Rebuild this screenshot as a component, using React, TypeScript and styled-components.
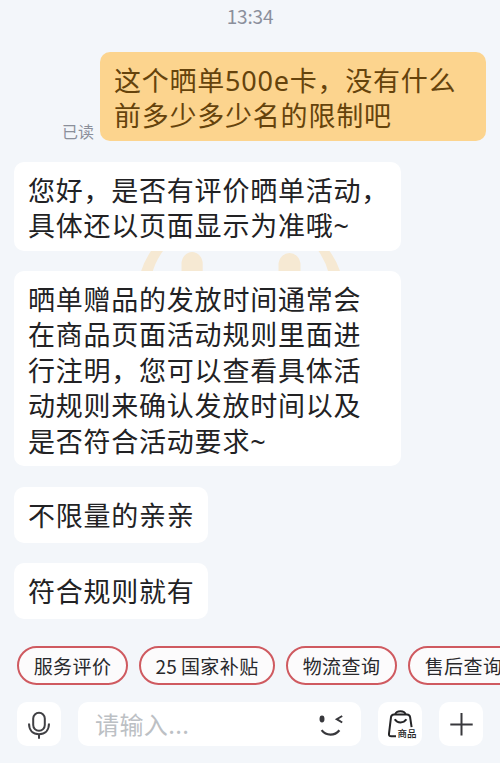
import styled, { createGlobalStyle } from "styled-components";

interface Message {
  id: number;
  lines: string[];
  width: number;
  height: number;
  gap: number;
}

const messages: Message[] = [
  {
    id: 1,
    lines: ["您好，是否有评价晒单活动，", "具体还以页面显示为准哦~"],
    width: 387,
    height: 89,
    gap: 20,
  },
  {
    id: 2,
    lines: [
      "晒单赠品的发放时间通常会",
      "在商品页面活动规则里面进",
      "行注明，您可以查看具体活",
      "动规则来确认发放时间以及",
      "是否符合活动要求~",
    ],
    width: 387,
    height: 195,
    gap: 21,
  },
  { id: 3, lines: ["不限量的亲亲"], width: 194, height: 56, gap: 20 },
  { id: 4, lines: ["符合规则就有"], width: 194, height: 56, gap: 0 },
];

const shortcuts = [
  { label: "服务评价", width: 111 },
  { label: "25 国家补贴", width: 136 },
  { label: "物流查询", width: 111 },
  { label: "售后查询", width: 111 },
];

const MicIcon = () => (
  <svg width="44" height="44" viewBox="0 0 44 44" fill="none" stroke="#404044">
    <rect x="16.2" y="10.8" width="11.6" height="18" rx="5.8" strokeWidth="2" />
    <path d="M12 21.5C12 28.5 16 32.2 22 32.2S32 28.5 32 21.5" strokeWidth="2" />
    <path d="M22 32v4.8" strokeWidth="2" />
  </svg>
);

const WinkIcon = () => (
  <svg width="30" height="30" viewBox="0 0 30 30" fill="none" stroke="#38383c">
    <ellipse cx="6" cy="10" rx="2.5" ry="3.4" fill="#38383c" stroke="none" />
    <path d="M26.200 7 20.800 10.200l5.400 3.300" strokeWidth="2" />
    <path d="M5.600 21.200c4.600 6 13 6 17.800 0" strokeWidth="2.200" />
  </svg>
);

const GoodsIcon = () => (
  <svg width="44" height="44" viewBox="0 0 44 44" fill="none" stroke="#242426">
    <path
      d="M18 34.3h-4.6c-2 0-2.7-1-2.4-2.8l2-16.3c.3-2 1.200-2.800 3-2.800h13c1.900 0 2.800.8 3.100 2.700l1.500 10"
      strokeWidth="2"
    />
    <path d="M17.200 12.500c1.200-4.200 9.200-4.200 10.400 0" strokeWidth="2" />
    <path d="M16.700 17.300c2.700 4.200 8.900 4.200 11.700 0" strokeWidth="2" />
    <text x="19.500" y="34.800" fill="#242426" stroke="none">
      商品
    </text>
  </svg>
);

const PlusIcon = () => (
  <svg width="44" height="44" viewBox="0 0 44 44" fill="none" stroke="#38383c">
    <path d="M22.500 11v22.400M11.300 22.500h22.400" strokeWidth="2" />
  </svg>
);

const Mascot = () => (
  <MascotArt viewBox="0 0 200 24" fill="#f6e9d3">
    <path d="M0 24Q4 11 11 1h12Q15 12 12 24z" />
    <path d="M41.5 24V14a10.6 12 0 0 1 21.2 0v10z" />
    <path d="M138.5 24V15a11 12 0 0 1 22 0v9z" />
    <path d="M178.5 1h11Q197 11 201 24h-12Q186 12 178.5 1z" />
  </MascotArt>
);

const App: React.FC = () => (
  <Screen>
    <GlobalStyle />
    <Time>{"13:34"}</Time>
    <SentRow>
      <ReadMark>{"已读"}</ReadMark>
      <SentBubble>
        <Line>{"这个晒单500e卡，没有什么"}</Line>
        <Line>{"前多少多少名的限制吧"}</Line>
      </SentBubble>
    </SentRow>
    <Thread>
      <Mascot />
      {messages.map(({ id, lines, width, height, gap }) => (
        <Bubble key={id} $width={width} $height={height} $gap={gap}>
          {lines.map((line) => (
            <Line key={line}>{line}</Line>
          ))}
        </Bubble>
      ))}
    </Thread>
    <Shortcuts>
      {shortcuts.map(({ label, width }) => (
        <Shortcut key={label} $width={width}>
          {label}
        </Shortcut>
      ))}
    </Shortcuts>
    <Composer>
      <IconButton>
        <MicIcon />
      </IconButton>
      <InputBox>
        <Placeholder>{"请输入..."}</Placeholder>
        <WinkIcon />
      </InputBox>
      <IconButton>
        <GoodsIcon />
      </IconButton>
      <IconButton>
        <PlusIcon />
      </IconButton>
    </Composer>
  </Screen>
);

const GlobalStyle = createGlobalStyle`
  * {
    box-sizing: border-box;
  }

  body {
    margin: 0;
    font-family: "Noto Sans CJK SC", sans-serif;
  }

  button {
    font-family: inherit;
  }
`;

const Screen = styled.div`
  display: flex;
  flex-direction: column;
  width: 500px;
  height: 763px;
  overflow: hidden;
  background-color: #f3f6fa;
`;

const Time = styled.div`
  height: 52px;
  padding-top: 3px;
  font-size: 19px;
  line-height: 26px;
  letter-spacing: -0.2px;
  text-align: center;
  color: #8b8f9c;
`;

const SentRow = styled.div`
  display: flex;
  align-items: flex-end;
  justify-content: flex-end;
  gap: 6px;
  padding-right: 14px;
`;

const ReadMark = styled.span`
  margin-bottom: -1px;
  font-size: 16px;
  line-height: 22px;
  color: #8b8f9a;
`;

const SentBubble = styled.div`
  width: 386px;
  height: 89px;
  padding: 11px 14px 0;
  border-radius: 10px;
  background-color: #fcd48e;
  color: #65430c;
`;

const Thread = styled.div`
  position: relative;
  display: flex;
  flex-direction: column;
  height: 484px;
  padding: 21px 14px 0;
`;

const MascotArt = styled.svg`
  position: absolute;
  top: 109px;
  left: 140px;
  width: 200px;
  height: 24px;
`;

const Bubble = styled.div<{ $width: number; $height: number; $gap: number }>`
  position: relative;
  flex: none;
  width: ${({ $width }) => $width}px;
  height: ${({ $height }) => $height}px;
  margin-bottom: ${({ $gap }) => $gap}px;
  padding: 11px 14px 0;
  border-radius: 10px;
  background-color: #fff;
  color: #222224;
`;

const Line = styled.div`
  font-family: "Noto Sans", "Noto Sans CJK SC", sans-serif;
  font-size: 27px;
  line-height: 35.4px;
  letter-spacing: 0.77px;
  white-space: pre;
`;

const Shortcuts = styled.div`
  display: flex;
  gap: 11px;
  margin-top: 21px;
  padding-left: 17px;
`;

const Shortcut = styled.button<{ $width: number }>`
  flex: none;
  width: ${({ $width }) => $width}px;
  height: 39px;
  padding: 0;
  border: 2px solid #cf5a60;
  border-radius: 20px;
  background-color: #fcfbfc;
  font-size: 19px;
  line-height: 35px;
  letter-spacing: 0.4px;
  word-spacing: -1px;
  white-space: nowrap;
  color: #29292c;
`;

const Composer = styled.div`
  display: flex;
  gap: 17px;
  margin-top: 17px;
  padding: 0 17px;
`;

const IconButton = styled.button`
  flex: none;
  width: 44px;
  height: 44px;
  padding: 0;
  border: none;
  border-radius: 10px;
  background-color: #fff;

  svg {
    display: block;
  }

  text {
    font-size: 9.5px;
    font-weight: 500;
  }
`;

const InputBox = styled.div`
  display: flex;
  align-items: center;
  justify-content: space-between;
  width: 283px;
  height: 44px;
  padding: 0 15px 0 17px;
  border-radius: 10px;
  background-color: #fff;
`;

const Placeholder = styled.span`
  font-size: 24px;
  line-height: 36px;
  letter-spacing: 0.4px;
  color: #bcc0c4;
`;

export default App;
